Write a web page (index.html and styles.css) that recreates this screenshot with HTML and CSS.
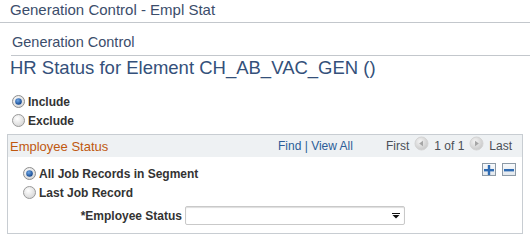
FILE: index.html
```html
<!DOCTYPE html>
<html>
<head>
<meta charset="utf-8">
<link rel="stylesheet" href="styles.css">
</head>
<body>
<div class="pagetitle">Generation Control - Empl Stat</div>
<div class="subtitle">Generation Control</div>
<h1 class="heading">HR Status for Element CH_AB_VAC_GEN ()</h1>

<div class="radios">
  <label class="radio-row">
    <svg class="radio" width="13" height="13" viewBox="0 0 13 13"><defs><radialGradient id="rg1" cx="40%" cy="35%" r="70%"><stop offset="0" stop-color="#ffffff"/><stop offset="1" stop-color="#d4d4d4"/></radialGradient><radialGradient id="dot1" cx="40%" cy="35%" r="70%"><stop offset="0" stop-color="#6fa8e8"/><stop offset="1" stop-color="#0b3e86"/></radialGradient></defs><circle cx="6.5" cy="6.5" r="6" fill="url(#rg1)" stroke="#8e8e8e"/><circle cx="6.5" cy="6.5" r="3.3" fill="url(#dot1)"/></svg>
    <span>Include</span>
  </label>
  <label class="radio-row">
    <svg class="radio" width="13" height="13" viewBox="0 0 13 13"><circle cx="6.5" cy="6.5" r="6" fill="url(#rg1)" stroke="#9a9a9a"/></svg>
    <span>Exclude</span>
  </label>
</div>

<div class="box">
  <div class="box-head">
    <span class="box-title">Employee Status</span>
    <span class="nav-links"><a class="lnk">Find</a> <span class="sep">|</span> <a class="lnk">View All</a></span>
    <span class="pager">
      <span>First</span>
      <svg class="navbtn" width="15" height="15" viewBox="0 0 15 15"><defs><radialGradient id="nb" cx="40%" cy="35%" r="70%"><stop offset="0" stop-color="#f4f4f4"/><stop offset="1" stop-color="#c6c6c6"/></radialGradient></defs><circle cx="7.5" cy="7.5" r="6.5" fill="url(#nb)" stroke="#d4d4d4"/><path d="M5.2 7.5 L9 4.8 L9 10.2 Z" fill="#a5a5a5"/></svg>
      <span>1 of 1</span>
      <svg class="navbtn" width="15" height="15" viewBox="0 0 15 15"><circle cx="7.5" cy="7.5" r="6.5" fill="url(#nb)" stroke="#d4d4d4"/><path d="M9.8 7.5 L6 4.8 L6 10.2 Z" fill="#a5a5a5"/></svg>
      <span>Last</span>
    </span>
  </div>
  <div class="box-body">
    <div class="box-main">
      <label class="radio-row">
        <svg class="radio" width="13" height="13" viewBox="0 0 13 13"><circle cx="6.5" cy="6.5" r="6" fill="url(#rg1)" stroke="#8e8e8e"/><circle cx="6.5" cy="6.5" r="3.3" fill="url(#dot1)"/></svg>
        <span>All Job Records in Segment</span>
      </label>
      <label class="radio-row">
        <svg class="radio" width="13" height="13" viewBox="0 0 13 13"><circle cx="6.5" cy="6.5" r="6" fill="url(#rg1)" stroke="#9a9a9a"/></svg>
        <span>Last Job Record</span>
      </label>
      <div class="field">
        <span class="field-label">*Employee Status</span>
        <span class="select">
          <svg width="8" height="6" viewBox="0 0 8 6"><rect x="0" y="0" width="8" height="1" fill="#111"/><path d="M0.5 2 L7.5 2 L4 5.5 Z" fill="#111"/></svg>
        </span>
      </div>
    </div>
    <div class="box-btns">
      <span class="sqbtn"><svg width="10" height="10" viewBox="0 0 10 10"><rect x="0" y="4" width="10" height="2.4" fill="#2e6bb3"/><rect x="3.8" y="0" width="2.4" height="10" fill="#2e6bb3"/></svg></span>
      <span class="sqbtn"><svg width="10" height="10" viewBox="0 0 10 10"><rect x="0" y="4" width="10" height="2.4" fill="#2e6bb3"/></svg></span>
    </div>
  </div>
</div>
</body>
</html>
```

FILE: styles.css
```css
html, body {
  margin: 0;
  padding: 0;
  background: #ffffff;
  font-family: "Liberation Sans", Arial, sans-serif;
}

.pagetitle {
  font-size: 15px;
  line-height: 17px;
  color: #3b4d6b;
  padding: 1px 0 4px 10px;
  border-bottom: 1px solid #c3c7cc;
}

.subtitle {
  font-size: 14.5px;
  line-height: 16px;
  color: #3b4d6b;
  margin-left: 11px;
  padding: 11px 0 5px 1px;
  border-bottom: 1px solid #c3c7cc;
}

.heading {
  margin: 0;
  font-weight: normal;
  font-size: 18.5px;
  line-height: 24px;
  color: #34507a;
  padding-left: 10px;
}

.radios {
  margin-top: 12px;
  padding-left: 12px;
}

.radio-row {
  display: flex;
  align-items: center;
  height: 19px;
  font-size: 12px;
  font-weight: bold;
  color: #333333;
}

.radio {
  margin-right: 3px;
  flex: none;
}

.box {
  margin: 4px 7px 0 7px;
  border: 1px solid #c8cdd2;
}

.box-head {
  display: flex;
  align-items: center;
  height: 22px;
  background: #eef1f3;
  padding: 0 10px 0 2px;
}

.box-title {
  font-size: 13px;
  color: #c0580f;
  flex: 1;
}

.nav-links {
  font-size: 12px;
  color: #2c5d98;
  margin-right: 33px;
}

.lnk {
  color: #2c5d98;
  text-decoration: none;
}

.sep {
  color: #2c5d98;
}

.pager {
  display: flex;
  align-items: center;
  gap: 5px;
  font-size: 12px;
  color: #4a4f56;
}

.navbtn {
  margin-top: -5px;
}

.box-body {
  display: flex;
  padding: 7px 6px 8px 14px;
}

.box-main {
  flex: 1;
}

.box-main .radio-row {
  padding-left: 1px;
}

.field {
  display: flex;
  align-items: center;
  margin-top: 4px;
}

.field-label {
  width: 160px;
  text-align: right;
  font-size: 12px;
  font-weight: bold;
  color: #333333;
  margin-right: 3px;
}

.select {
  box-sizing: border-box;
  width: 220px;
  height: 19px;
  border: 1px solid #c9c9c9;
  border-radius: 2px;
  background: #ffffff;
  display: flex;
  align-items: center;
  justify-content: flex-end;
  padding-right: 4px;
  box-shadow: inset 0 1px 1px #dddddd;
}

.box-btns {
  display: flex;
  gap: 6px;
  align-items: flex-start;
  margin-top: -1px;
}

.sqbtn {
  width: 14px;
  height: 13px;
  border: 1px solid #8d9aa6;
  background: linear-gradient(#f7f9fb, #e3e8ed);
  display: flex;
  align-items: center;
  justify-content: center;
  box-sizing: border-box;
}
```
